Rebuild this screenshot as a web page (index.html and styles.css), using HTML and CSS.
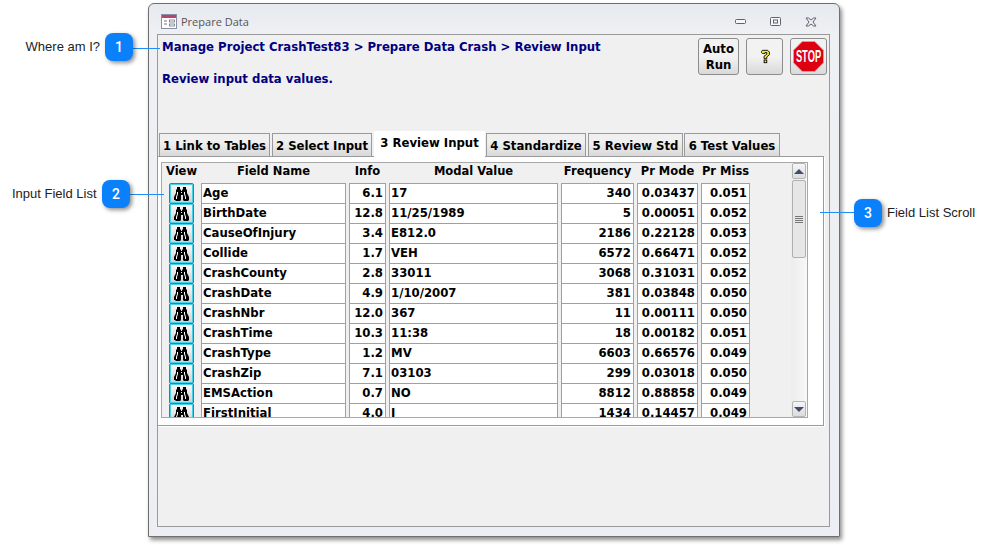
FILE: index.html
```html
<!DOCTYPE html>
<html lang="en">
<head>
    <meta charset="UTF-8">
    <meta name="viewport" content="width=device-width, initial-scale=1.0">
    <title>Prepare Data - Review Input</title>
    <link rel="stylesheet" href="styles.css">
</head>
<body>
    <svg class="defs" width="0" height="0">
        <symbol id="binoculars" viewBox="0 0 15 14">
            <path fill="#000" d="M3 0h3v2l1 1v1h1V3l1-1V0h3v2l1 1v3l1 2 1 2v3l-1 1h-4l-1-1V8H7v5l-1 1H2l-1-1H0v-3l1-2 1-2V3l1-1z"/>
            <path fill="#fff" d="M3 5h1v2L3 10v2H2v-2l1-3zM10 5h1v2l1 3v2h-1v-2l-1-3zM7 5h1v1H7z"/>
        </symbol>
    </svg>

    <div class="page">
        <div class="callout-label label-1">Where am I?</div>
        <div class="callout-line line-1"></div>
        <div class="badge badge-1">1</div>

        <div class="callout-label label-2">Input Field List</div>
        <div class="callout-line line-2"></div>
        <div class="badge badge-2">2</div>

        <div class="callout-line line-3"></div>
        <div class="badge badge-3">3</div>
        <div class="callout-label label-3">Field List Scroll</div>

        <div class="window">
            <div class="titlebar">
                <svg class="app-icon" width="16" height="15" viewBox="0 0 16 15">
                    <rect x="0.5" y="0.5" width="15" height="14" fill="#fff" stroke="#8a8fa8"/>
                    <rect x="1" y="1" width="14" height="3" fill="#b8446a"/>
                    <path d="M3 7h3M3 10h3" stroke="#6a7486"/>
                    <rect x="8.5" y="6" width="5" height="2" fill="#fff" stroke="#6a7486" stroke-width="0.8"/>
                    <rect x="8.5" y="10" width="5" height="2" fill="#fff" stroke="#6a7486" stroke-width="0.8"/>
                </svg>
                <span class="title">Prepare Data</span>
                <div class="winbtns">
                    <svg width="11" height="6" viewBox="0 0 11 6"><rect x="0.5" y="0.5" width="10" height="4" rx="1" fill="#f6f7f9" stroke="#5d6470"/></svg>
                    <svg width="11" height="9" viewBox="0 0 11 9"><rect x="0.5" y="0.5" width="10" height="8" rx="1" fill="#f6f7f9" stroke="#5d6470"/><rect x="3.5" y="3" width="4" height="3" fill="none" stroke="#5d6470"/></svg>
                    <svg width="12" height="10" viewBox="0 0 12 10"><path d="M1 1h2.500L6 3l2.500-2H11L8 5l3 4H8.500L6 7 3.500 9H1l3-4z" fill="#eceef2" stroke="#5d6470"/></svg>
                </div>
            </div>

            <div class="panel">
                <div class="head">
                    <div class="crumbs">
                        <p>Manage Project CrashTest83 &gt; Prepare Data Crash &gt; Review Input</p>
                        <p class="sub">Review input data values.</p>
                    </div>
                    <div class="tools">
                        <div class="tool auto">Auto<br>Run</div>
                        <div class="tool">
                            <svg width="10" height="15" viewBox="0 0 11 17">
                                <path fill="#f5ee2a" stroke="#000" d="M2.5 1.5h6l2 2v3l-3 2.500v2h-3v-3l3-2v-2h-2v1h-3l-1-1v-1z"/>
                                <rect x="4.500" y="12.500" width="3" height="3" fill="#f5ee2a" stroke="#000"/>
                            </svg>
                        </div>
                        <div class="tool">
                            <svg width="31" height="31" viewBox="0 0 32 32">
                                <polygon points="9.500,0.500 22.500,0.500 31.500,9.500 31.500,22.500 22.500,31.500 9.500,31.500 0.500,22.500 0.500,9.500" fill="#dc0010" stroke="#b0b0b0"/>
                                <text class="stop-text" x="16" y="22" text-anchor="middle" textLength="26" lengthAdjust="spacingAndGlyphs">STOP</text>
                            </svg>
                        </div>
                    </div>
                </div>

                <div class="tabs">
                    <div class="tab t1">1 Link to Tables</div>
                    <div class="tab t2">2 Select Input</div>
                    <div class="tab t3 active">3 Review Input</div>
                    <div class="tab t4">4 Standardize</div>
                    <div class="tab t5">5 Review Std</div>
                    <div class="tab t6">6 Test Values</div>
                </div>

                <div class="tabpage">
                    <div class="grid">
                        <div class="list">
                            <div class="row header">
                                <span class="view-head">View</span><span>Field Name</span><span>Info</span><span>Modal Value</span><span>Frequency</span><span>Pr Mode</span><span>Pr Miss</span>
                            </div>
                            <div class="row"><div class="view"><svg><use href="#binoculars"/></svg></div><div class="cell">Age</div><div class="cell num">6.1</div><div class="cell">17</div><div class="cell num">340</div><div class="cell num">0.03437</div><div class="cell num">0.051</div></div>
                            <div class="row"><div class="view"><svg><use href="#binoculars"/></svg></div><div class="cell">BirthDate</div><div class="cell num">12.8</div><div class="cell">11/25/1989</div><div class="cell num">5</div><div class="cell num">0.00051</div><div class="cell num">0.052</div></div>
                            <div class="row"><div class="view"><svg><use href="#binoculars"/></svg></div><div class="cell">CauseOfInjury</div><div class="cell num">3.4</div><div class="cell">E812.0</div><div class="cell num">2186</div><div class="cell num">0.22128</div><div class="cell num">0.053</div></div>
                            <div class="row"><div class="view"><svg><use href="#binoculars"/></svg></div><div class="cell">Collide</div><div class="cell num">1.7</div><div class="cell">VEH</div><div class="cell num">6572</div><div class="cell num">0.66471</div><div class="cell num">0.052</div></div>
                            <div class="row"><div class="view"><svg><use href="#binoculars"/></svg></div><div class="cell">CrashCounty</div><div class="cell num">2.8</div><div class="cell">33011</div><div class="cell num">3068</div><div class="cell num">0.31031</div><div class="cell num">0.052</div></div>
                            <div class="row"><div class="view"><svg><use href="#binoculars"/></svg></div><div class="cell">CrashDate</div><div class="cell num">4.9</div><div class="cell">1/10/2007</div><div class="cell num">381</div><div class="cell num">0.03848</div><div class="cell num">0.050</div></div>
                            <div class="row"><div class="view"><svg><use href="#binoculars"/></svg></div><div class="cell">CrashNbr</div><div class="cell num">12.0</div><div class="cell">367</div><div class="cell num">11</div><div class="cell num">0.00111</div><div class="cell num">0.050</div></div>
                            <div class="row"><div class="view"><svg><use href="#binoculars"/></svg></div><div class="cell">CrashTime</div><div class="cell num">10.3</div><div class="cell">11:38</div><div class="cell num">18</div><div class="cell num">0.00182</div><div class="cell num">0.051</div></div>
                            <div class="row"><div class="view"><svg><use href="#binoculars"/></svg></div><div class="cell">CrashType</div><div class="cell num">1.2</div><div class="cell">MV</div><div class="cell num">6603</div><div class="cell num">0.66576</div><div class="cell num">0.049</div></div>
                            <div class="row"><div class="view"><svg><use href="#binoculars"/></svg></div><div class="cell">CrashZip</div><div class="cell num">7.1</div><div class="cell">03103</div><div class="cell num">299</div><div class="cell num">0.03018</div><div class="cell num">0.050</div></div>
                            <div class="row"><div class="view"><svg><use href="#binoculars"/></svg></div><div class="cell">EMSAction</div><div class="cell num">0.7</div><div class="cell">NO</div><div class="cell num">8812</div><div class="cell num">0.88858</div><div class="cell num">0.049</div></div>
                            <div class="row"><div class="view"><svg><use href="#binoculars"/></svg></div><div class="cell">FirstInitial</div><div class="cell num">4.0</div><div class="cell">J</div><div class="cell num">1434</div><div class="cell num">0.14457</div><div class="cell num">0.049</div></div>
                        </div>
                        <div class="scrollbar">
                            <div class="sb-btn"><span class="arrow-up"></span></div>
                            <div class="sb-thumb"><span class="grip"></span></div>
                            <div class="sb-track"></div>
                            <div class="sb-btn"><span class="arrow-down"></span></div>
                        </div>
                    </div>
                </div>
            </div>
        </div>
    </div>
</body>
</html>
```

FILE: styles.css
```css
html, body {
    margin: 0;
    padding: 0;
    background-color: #fff;
}

.defs {
    position: absolute;
}

.page {
    position: relative;
    width: 993px;
    height: 545px;
    padding: 3px 0 0 148px;
    box-sizing: border-box;
    overflow: hidden;
}

/* callouts sit over the screenshot */
.badge {
    position: absolute;
    width: 28px;
    height: 28px;
    border-radius: 8px;
    background-color: #0a80fb;
    box-shadow: 2px 2px 4px rgba(0, 0, 0, 0.45);
    color: #fff;
    font: 500 14px/28px Roboto, Arial, sans-serif;
    text-align: center;
    z-index: 3;
}

.badge-1 { left: 105px; top: 33px; }
.badge-2 { left: 102px; top: 180px; }
.badge-3 { left: 854px; top: 199px; }

.callout-line {
    position: absolute;
    height: 1px;
    background-color: #1f8ff5;
    z-index: 2;
}

.line-1 { left: 133px; top: 48px; width: 27px; }
.line-2 { left: 130px; top: 194px; width: 34px; }
.line-3 { left: 820px; top: 212px; width: 34px; }

.callout-label {
    position: absolute;
    font: 13px/16px "Liberation Sans", Arial, sans-serif;
    color: #222;
    white-space: nowrap;
}

.label-1 { right: 893px; top: 39px; }
.label-2 { left: 12px; top: 186px; }
.label-3 { left: 887px; top: 205px; }

.window {
    width: 692px;
    height: 534px;
    box-sizing: border-box;
    padding: 0 9px 9px 8px;
    border: 1px solid #6f6f6f;
    border-radius: 6px 6px 0 0;
    background: linear-gradient(to bottom, #e6e9ee, #eef0f4 30px, #eceef3);
    box-shadow: 2px 3px 4px rgba(0, 0, 0, 0.45);
}

.titlebar {
    display: flex;
    align-items: center;
    height: 25px;
    padding: 5px 0 0 4px;
}

.app-icon {
    margin-right: 4px;
}

.title {
    font: 11px "Open Sans", sans-serif;
    color: #555;
}

.winbtns {
    display: flex;
    align-items: center;
    gap: 24px;
    margin-left: auto;
    padding-right: 13px;
}

.panel {
    height: 493px;
    box-sizing: border-box;
    padding-top: 1px;
    border: 1px solid #9a9a9a;
    background-color: #f0f0f0;
    font-family: "DejaVu Sans", Verdana, sans-serif;
    font-weight: bold;
    font-size: 11.700px;
}

.head {
    display: flex;
    justify-content: space-between;
    height: 93px;
    padding: 2px 2px 0 4px;
}

.crumbs {
    padding-top: 1px;
}

.crumbs p {
    margin: 0;
    line-height: 16px;
    color: #000080;
    white-space: nowrap;
}

.crumbs p.sub {
    margin-top: 16px;
}

.tools {
    display: flex;
    gap: 7px;
}

.tool {
    display: flex;
    align-items: center;
    justify-content: center;
    width: 37px;
    height: 37px;
    box-sizing: border-box;
    border: 1px solid #8c8c8c;
    border-radius: 3px;
    background: linear-gradient(to bottom, #f2f2f2 50%, #d9d9d9);
    line-height: 16px;
    text-align: center;
    color: #000;
}

.tool.auto {
    width: 41px;
}

.stop-text {
    font: bold 17px "Liberation Sans", sans-serif;
    fill: #fff;
}

.tabs {
    display: flex;
    align-items: flex-end;
    height: 25px;
    padding-left: 1px;
}

.tab {
    height: 23px;
    box-sizing: border-box;
    margin-right: 2px;
    border: 1px solid #9a9a9a;
    border-bottom: none;
    background: linear-gradient(to bottom, #f0f0f0 35%, #d9d9d9);
    line-height: 24px;
    text-align: center;
    white-space: nowrap;
    color: #000;
}

.tab.active {
    position: relative;
    height: 26px;
    margin-bottom: -1px;
    border: none;
    background: #fff;
    line-height: 24px;
    z-index: 1;
}

.t1 { width: 111px; }
.t2 { width: 100px; }
.t3 { width: 111px; margin-right: 1px; }
.t4 { width: 100px; }
.t5 { width: 95px; margin-right: 1px; }
.t6 { width: 96px; }

.tabpage {
    width: 667px;
    height: 270px;
    box-sizing: border-box;
    margin-left: -1px;
    padding: 5px 15px 7px 3px;
    border: 1px solid #9a9a9a;
    background-color: #fff;
    box-shadow: 1px 1px 0 #fff;
}

.grid {
    display: flex;
    height: 256px;
    box-sizing: border-box;
    border: 1px solid #a8a8a8;
    background-color: #f0f0f0;
    overflow: hidden;
}

.list {
    width: 630px;
    box-sizing: border-box;
    padding-left: 7px;
    overflow: hidden;
}

.row {
    display: grid;
    grid-template-columns: 29px 145px 37px 169px 73px 61px 49px;
    column-gap: 3px;
    height: 20px;
}

.row.header {
    line-height: 17px;
    font-size: 11.500px;
    text-align: center;
    white-space: nowrap;
    color: #000;
}

.view-head {
    width: 25px;
    display: flex;
    justify-content: center;
}

.view {
    display: flex;
    align-items: center;
    justify-content: center;
    width: 25px;
    height: 21px;
    box-sizing: border-box;
    border: 1px solid #168eb0;
    border-radius: 2px;
    background: linear-gradient(to bottom, #fafafa, #cfcfcf);
    box-shadow: inset 0 0 0 1px #45d2ea;
}

.view svg {
    width: 15px;
    height: 14px;
}

.cell {
    height: 21px;
    box-sizing: border-box;
    padding: 0 2px 0 1px;
    border: 1px solid #a0a0a0;
    background-color: #fff;
    line-height: 19px;
    white-space: nowrap;
    overflow: hidden;
    color: #000;
}

.cell.num {
    text-align: right;
}

.scrollbar {
    display: flex;
    flex-direction: column;
    width: 14px;
    padding: 0 1px;
    background: linear-gradient(to right, #ececec, #f8f8f8);
}

.sb-btn {
    display: flex;
    align-items: center;
    justify-content: center;
    height: 16px;
    flex: none;
    border: 1px solid #b4b4b4;
    border-radius: 2px;
    box-sizing: border-box;
    background: linear-gradient(to bottom, #f6f6f6, #dcdcdc);
}

.arrow-up,
.arrow-down {
    width: 0;
    height: 0;
    border-left: 5px solid transparent;
    border-right: 5px solid transparent;
}

.arrow-up {
    border-bottom: 5px solid #414d6e;
}

.arrow-down {
    border-top: 5px solid #414d6e;
}

.sb-thumb {
    display: flex;
    align-items: center;
    justify-content: center;
    height: 78px;
    flex: none;
    margin-top: 1px;
    border: 1px solid #b0b0b0;
    border-radius: 2px;
    box-sizing: border-box;
    background-color: #e6e6e6;
}

.grip {
    width: 8px;
    height: 7px;
    background: repeating-linear-gradient(to bottom, #777 0, #777 1px, #e6e6e6 1px, #e6e6e6 2px);
}

.sb-track {
    flex: 1;
}
```
